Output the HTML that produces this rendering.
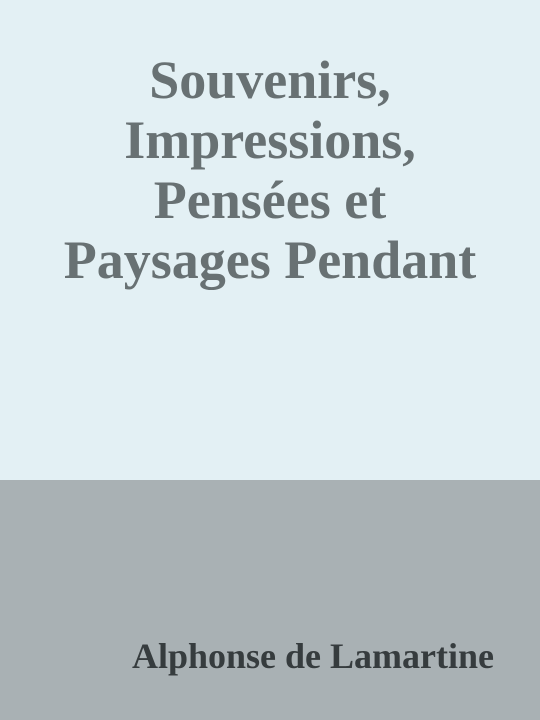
<!DOCTYPE html>
<html><head><meta charset="utf-8"><style>
html,body{margin:0;padding:0;width:540px;height:720px;overflow:hidden;font-family:"Liberation Serif",serif;}
.top{position:absolute;left:0;top:0;width:540px;height:480px;background:#e3f0f4;}
.bot{position:absolute;left:0;top:480px;width:540px;height:240px;background:#a9b1b4;}
.title{position:absolute;left:0;width:540px;top:50px;text-align:center;font-weight:bold;font-size:54px;line-height:60px;color:#687173;}
.author{position:absolute;right:46px;top:634px;font-weight:bold;font-size:36px;line-height:44px;color:#363c3e;white-space:nowrap;}
</style></head><body>
<div class="top"></div><div class="bot"></div>
<div class="title">Souvenirs,<br>Impressions,<br>Pensées et<br>Paysages Pendant</div>
<div class="author">Alphonse de Lamartine</div>
</body></html>
